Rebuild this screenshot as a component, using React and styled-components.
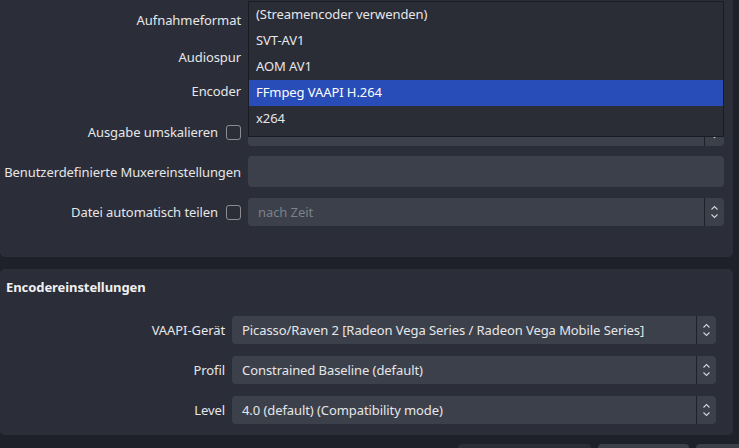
import React from "react";
import styled, { createGlobalStyle } from "styled-components";

const GlobalStyle = createGlobalStyle`
  html, body {
    margin: 0;
    padding: 0;
    background: #1f212a;
    overflow: hidden;
  }
  body {
    font-family: "Noto Sans", "Open Sans", sans-serif;
    font-size: 13px;
    letter-spacing: -0.08px;
    color: #e6e6e8;
  }
`;

const Page = styled.div`
  position: relative;
  width: 739px;
  height: 448px;
  overflow: hidden;
`;

const Panel = styled.section`
  background: #2b2e38;
  width: 733px;
  box-sizing: border-box;
  padding: ${(p) => p.$pad};
  border-radius: ${(p) => p.$radius};
`;

const Row = styled.div`
  display: grid;
  grid-template-columns: ${(p) => p.$label}px 1fr;
  column-gap: 7px;
  align-items: center;
  margin-top: ${(p) => p.$mt || 0}px;
`;

const Label = styled.div`
  display: flex;
  justify-content: flex-end;
  align-items: center;
  gap: 8px;
  white-space: nowrap;
`;

const Checkbox = styled.span`
  width: 13px;
  height: 13px;
  border: 1.5px solid #8b8d93;
  border-radius: 3px;
  flex: none;
`;

const Field = styled.div`
  display: flex;
  align-items: stretch;
  height: ${(p) => p.$h || 28}px;
  background: #3c404b;
  border-radius: 4px;
  overflow: hidden;
`;

const FieldText = styled.div`
  flex: 1;
  display: flex;
  align-items: center;
  padding-left: 10px;
  white-space: nowrap;
  color: ${(p) => (p.$muted ? "#7d8088" : "#e6e6e8")};
`;

const Spin = styled.div`
  width: 19px;
  border-left: 1px solid #1f212a;
  display: flex;
  align-items: center;
  justify-content: center;
`;

const Title = styled.h2`
  margin: 0;
  font-size: 13px;
  font-weight: 700;
  color: #f0f0f2;
`;

const Gap = styled.div`
  height: 12px;
`;

const Popup = styled.ul`
  position: absolute;
  left: 248px;
  top: 1px;
  width: 474px;
  margin: 0;
  padding: 0 0 4px;
  list-style: none;
  background: #2a2c36;
  border: 1px solid #1a1c23;
`;

const Item = styled.li`
  height: 26px;
  line-height: 25px;
  padding-left: 7px;
  background: ${(p) => (p.$active ? "#284cb8" : "transparent")};
  color: ${(p) => (p.$active ? "#ffffff" : "#e6e6e8")};
`;

const Footer = styled.div`
  display: flex;
  justify-content: flex-end;
  gap: 7px;
  margin-top: 9px;
  margin-right: -48px;
`;

const Button = styled.div`
  width: ${(p) => p.$w}px;
  height: 28px;
  border-radius: 4px;
  background: ${(p) => (p.$dim ? "#2b2e38" : "#3c404b")};
`;

const Chevrons = () => (
  <svg width="9" height="16" viewBox="0 0 9 16" fill="none" stroke="#d0d2d6" strokeWidth="1.1">
    <path d="M1.5 5.5 L4.5 2.5 L7.5 5.5" />
    <path d="M1.5 10.5 L4.5 13.5 L7.5 10.5" />
  </svg>
);

const ComboField = ({ text, muted }) => (
  <Field>
    <FieldText $muted={muted}>{text}</FieldText>
    <Spin>
      <Chevrons />
    </Spin>
  </Field>
);

const encoders = [
  "(Streamencoder verwenden)",
  "SVT-AV1",
  "AOM AV1",
  "FFmpeg VAAPI H.264",
  "x264",
];

export default function App() {
  return (
    <Page>
      <GlobalStyle />
      <Panel $pad="6px 9px 31px 0" $radius="0 0 5px 5px">
        <Row $label={241}>
          <Label>Aufnahmeformat</Label>
          <ComboField />
        </Row>
        <Row $label={241} $mt={9}>
          <Label>Audiospur</Label>
          <Field />
        </Row>
        <Row $label={241} $mt={6}>
          <Label>Encoder</Label>
          <ComboField />
        </Row>
        <Row $label={241} $mt={13}>
          <Label>
            Ausgabe umskalieren <Checkbox />
          </Label>
          <ComboField />
        </Row>
        <Row $label={241} $mt={10}>
          <Label>Benutzerdefinierte Muxereinstellungen</Label>
          <Field $h={31} />
        </Row>
        <Row $label={241} $mt={11}>
          <Label>
            Datei automatisch teilen <Checkbox />
          </Label>
          <ComboField text="nach Zeit" muted />
        </Row>
      </Panel>
      <Gap />
      <Panel $pad="9px 17px 11px 6px" $radius="5px">
        <Title>Encodereinstellungen</Title>
        <Row $label={219} $mt={20}>
          <Label>VAAPI-Gerät</Label>
          <ComboField text="Picasso/Raven 2 [Radeon Vega Series / Radeon Vega Mobile Series]" />
        </Row>
        <Row $label={219} $mt={12}>
          <Label>Profil</Label>
          <ComboField text="Constrained Baseline (default)" />
        </Row>
        <Row $label={219} $mt={12}>
          <Label>Level</Label>
          <ComboField text="4.0 (default) (Compatibility mode)" />
        </Row>
      </Panel>
      <Footer>
        <Button $w={133} $dim />
        <Button $w={91} />
        <Button $w={91} />
      </Footer>
      <Popup>
        {encoders.map((e) => (
          <Item key={e} $active={e === "FFmpeg VAAPI H.264"}>
            {e}
          </Item>
        ))}
      </Popup>
    </Page>
  );
}
